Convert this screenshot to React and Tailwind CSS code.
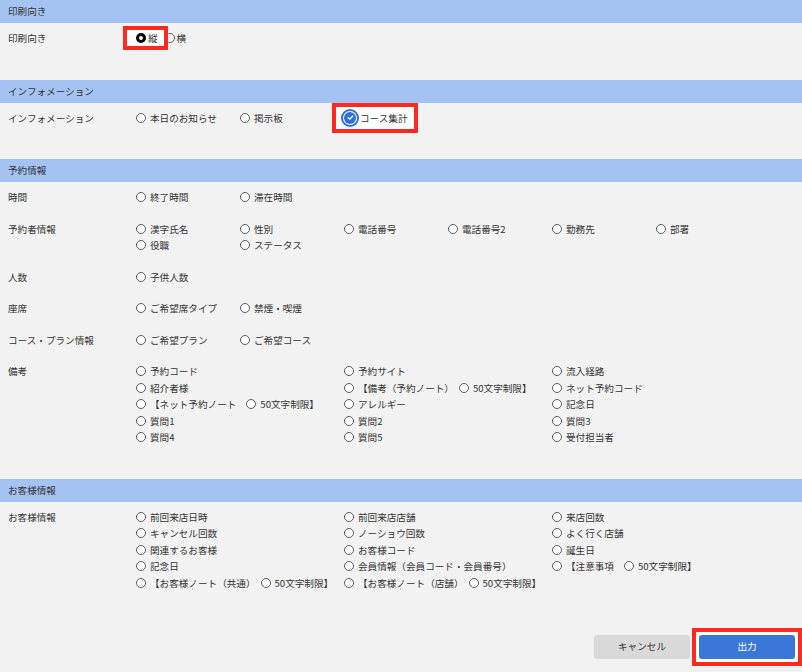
import React from 'react';

const Box = ({ checked }) =>
  checked ? (
    <span className="w-[12px] h-[12px] shrink-0 rounded-full bg-[#2f6fde] ring-2 ring-[#2f6fde] ring-offset-1 ring-offset-white flex items-center justify-center">
      <svg viewBox="0 0 12 12" className="w-[9px] h-[9px]">
        <path d="M3 6.3 L5.2 8.3 L9 4" stroke="white" strokeWidth="1.6" fill="none" strokeLinecap="round" strokeLinejoin="round" />
      </svg>
    </span>
  ) : (
    <span className="w-[10px] h-[10px] shrink-0 rounded-full border border-[#5c5c5c] bg-white" />
  );

const Item = ({ label, extra, tight }) => (
  <div className="flex items-center h-[16.5px] whitespace-nowrap">
    <Box />
    <span className="ml-[4px]">{label}</span>
    {extra && (
      <>
        <span className={tight ? 'ml-[5px] flex' : 'ml-[10px] flex'}>
          <Box />
        </span>
        <span className="ml-[4px]">{extra}</span>
      </>
    )}
  </div>
);

const Section = ({ title, children }) => (
  <section className="pb-[25px]">
    <div className="h-[23px] bg-[#a4c2f2] flex items-center px-2">{title}</div>
    {children}
  </section>
);

const Row = ({ label, children }) => (
  <div className="flex pt-[7px] pb-[8px] px-2">
    <div className="w-[128px] shrink-0 h-[16.5px] flex items-center">{label}</div>
    <div className="flex-1">{children}</div>
  </div>
);

const Grid6 = ({ items }) => (
  <div className="grid grid-cols-[repeat(6,104px)]">
    {items.map((it) => (
      <Item key={it} label={it} />
    ))}
  </div>
);

const Grid3 = ({ items }) => (
  <div className="grid grid-cols-[repeat(3,208px)]">
    {items.map((it) => (
      <Item key={it.label} {...it} />
    ))}
  </div>
);

const notes = [
  { label: '予約コード' },
  { label: '予約サイト' },
  { label: '流入経路' },
  { label: '紹介者様' },
  { label: '【備考（予約ノート）', extra: '50文字制限】', tight: true },
  { label: 'ネット予約コード' },
  { label: '【ネット予約ノート', extra: '50文字制限】' },
  { label: 'アレルギー' },
  { label: '記念日' },
  { label: '質問1' },
  { label: '質問2' },
  { label: '質問3' },
  { label: '質問4' },
  { label: '質問5' },
  { label: '受付担当者' },
];

const customer = [
  { label: '前回来店日時' },
  { label: '前回来店店舗' },
  { label: '来店回数' },
  { label: 'キャンセル回数' },
  { label: 'ノーショウ回数' },
  { label: 'よく行く店舗' },
  { label: '関連するお客様' },
  { label: 'お客様コード' },
  { label: '誕生日' },
  { label: '記念日' },
  { label: '会員情報（会員コード・会員番号）' },
  { label: '【注意事項', extra: '50文字制限】' },
  { label: '【お客様ノート（共通）', extra: '50文字制限】', tight: true },
  { label: '【お客様ノート（店舗）', extra: '50文字制限】', tight: true },
];

export default function App() {
  return (
    <div className="min-h-screen bg-[#f2f2f2] text-[#333] text-[9.6px] font-['Noto_Sans_CJK_JP','Liberation_Sans',sans-serif]">
      {/* 印刷向き */}
      <Section title="印刷向き">
        <Row label="印刷向き">
          <div className="flex items-center h-[16.5px]">
            <div className="relative flex items-center h-[16.5px]">
              <span className="absolute -left-[13px] -right-[10px] -top-[4px] -bottom-[3.5px] bg-white border-4 border-[#ff2a1f]" />
              <span className="relative flex items-center">
                <span className="w-[10px] h-[10px] rounded-full border-[3px] border-black bg-white" />
                <span className="ml-[2px]">縦</span>
              </span>
            </div>
            <span className="ml-[7px] w-[10px] h-[10px] rounded-full border border-[#5c5c5c] bg-white" />
            <span className="ml-[2px]">横</span>
          </div>
        </Row>
      </Section>

      {/* インフォメーション */}
      <Section title="インフォメーション">
        <Row label="インフォメーション">
          <div className="grid grid-cols-[repeat(6,104px)]">
            <Item label="本日のお知らせ" />
            <Item label="掲示板" />
            <div className="relative flex items-center h-[16.5px] w-fit">
              <span className="absolute -left-[12px] -right-[10px] -top-[7px] -bottom-[6.5px] bg-white border-4 border-[#ff2a1f]" />
              <span className="relative flex items-center whitespace-nowrap">
                <Box checked />
                <span className="ml-[4px]">コース集計</span>
              </span>
            </div>
          </div>
        </Row>
      </Section>

      {/* 予約情報 */}
      <Section title="予約情報">
        <Row label="時間">
          <Grid6 items={['終了時間', '滞在時間']} />
        </Row>
        <Row label="予約者情報">
          <Grid6 items={['漢字氏名', '性別', '電話番号', '電話番号2', '勤務先', '部署', '役職', 'ステータス']} />
        </Row>
        <Row label="人数">
          <Grid6 items={['子供人数']} />
        </Row>
        <Row label="座席">
          <Grid6 items={['ご希望席タイプ', '禁煙・喫煙']} />
        </Row>
        <Row label="コース・プラン情報">
          <Grid6 items={['ご希望プラン', 'ご希望コース']} />
        </Row>
        <Row label="備考">
          <Grid3 items={notes} />
        </Row>
      </Section>

      {/* お客様情報 */}
      <Section title="お客様情報">
        <Row label="お客様情報">
          <Grid3 items={customer} />
        </Row>
      </Section>

      <div className="flex justify-end items-center pt-[3.5px]">
        <button className="w-[96px] h-[24px] rounded-[3px] bg-[#d9d9d9] text-[#333]">キャンセル</button>
        <div className="ml-[2px] border-4 border-[#ff2a1f] p-[3px] bg-white">
          <button className="w-[96px] h-[24px] rounded-[3px] bg-[#3a78d8] text-white block">出力</button>
        </div>
      </div>
    </div>
  );
}
